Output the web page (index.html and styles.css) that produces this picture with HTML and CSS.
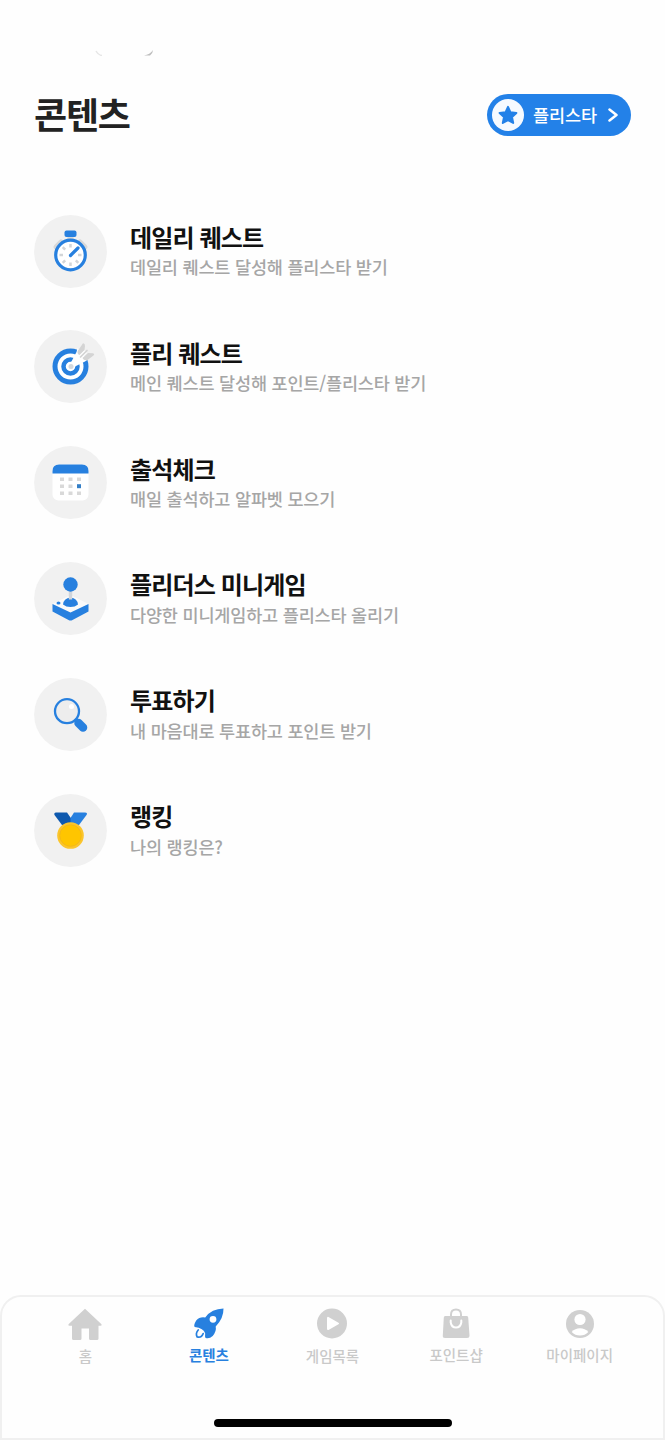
FILE: index.html
```html
<!DOCTYPE html>
<html lang="ko">
<head>
<meta charset="utf-8">
<title>콘텐츠</title>
<link rel="stylesheet" href="styles.css">
</head>
<body>
<div class="app">
  <div class="status"><svg width="60" height="8" viewBox="0 0 60 8"><path d="M1 3Q3 7 7 7.500" fill="none" stroke="#e6e6e6" stroke-width="1.500"/><path d="M58 2Q55 6.500 49 7.500L55 7.500Q58 5 58 2Z" fill="#bdbdbd"/></svg></div>
  <header class="header">
    <h1 class="title">콘텐츠</h1>
    <a class="pill">
      <svg class="pill-star" viewBox="0 0 32 32"><circle cx="16" cy="16" r="16" fill="#f6faff"/><path d="M16 7.800L18.500 13.300L24.400 14L20 18.100L21.200 24L16 21.100L10.800 24L12 18.100L7.600 14L13.500 13.300Z" fill="#2381e8" stroke="#2381e8" stroke-width="2" stroke-linejoin="round"/></svg>
      <span class="pill-text">플리스타</span>
      <svg class="pill-arrow" viewBox="0 0 10 14"><path d="M1.500 1.500L8.500 7L1.500 12.500" fill="none" stroke="#fff" stroke-width="2.500" stroke-linecap="round" stroke-linejoin="round"/></svg>
    </a>
  </header>

  <main class="list">
    <div class="item">
      <svg class="icon" viewBox="0 0 73 73"><circle cx="36.500" cy="36.500" r="36.400" fill="#f1f1f1"/><path d="M22 32L27 27M51 32L46 27" stroke="#d8d8d8" stroke-width="5" stroke-linecap="round"/><rect x="33.500" y="20" width="6" height="7" fill="#d8d8d8"/><rect x="30.500" y="15.500" width="12" height="6.500" rx="2" fill="#2780df"/><circle cx="36.500" cy="40" r="14.800" fill="#fff" stroke="#2780df" stroke-width="3.200"/><g stroke="#d2d5d8" stroke-width="2.500"><path d="M36.500 29v3.500M36.500 47.500V51M25.500 40H29M44 40h3.500M28.700 32.200l2.500 2.500M28.700 47.800l2.500-2.500M44.300 47.800l-2.500-2.500"/></g><path d="M36.500 40.500L44 33" stroke="#2780df" stroke-width="3.200" stroke-linecap="round"/></svg>
      <div class="copy"><h2 class="name">데일리 퀘스트</h2><p class="desc">데일리 퀘스트 달성해 플리스타 받기</p></div>
    </div>
    <div class="item">
      <svg class="icon" viewBox="0 0 73 73"><circle cx="36.500" cy="36.500" r="36.400" fill="#f1f1f1"/><circle cx="36.500" cy="36.500" r="15.500" fill="#fff" stroke="#2780df" stroke-width="5"/><circle cx="36.500" cy="36.500" r="7" fill="#fff" stroke="#2780df" stroke-width="4.500"/><path d="M43.500 18L54.500 29L51 31.500L42 36L38.500 38.500L35 35L38 30.500L42.500 22Z" fill="#fff"/><path d="M37.500 35.500L51.500 21.500" stroke="#fff" stroke-width="4"/><path d="M43.700 21L49 13.200Q51 13 51 16L50.500 20L45.500 25Q43 24 43.700 21ZM48.500 28L54 23L59 23.300Q61 24 59.500 25.500L53.500 30Q50 31 48.500 28Z" fill="#d4d4d4"/><path d="M46.500 27L53 20.500" stroke="#d4d4d4" stroke-width="1.700" stroke-linecap="round"/><circle cx="37" cy="36.500" r="2.500" fill="#d3d8dd"/></svg>
      <div class="copy"><h2 class="name">플리 퀘스트</h2><p class="desc">메인 퀘스트 달성해 포인트/플리스타 받기</p></div>
    </div>
    <div class="item">
      <svg class="icon" viewBox="0 0 73 73"><circle cx="36.500" cy="36.500" r="36.400" fill="#f1f1f1"/><rect x="18.500" y="18.500" width="36" height="36" rx="6" fill="#fff"/><path d="M18.500 27.500V25Q18.500 18.500 25 18.500H48Q54.500 18.500 54.500 25V27.500Z" fill="#2780df"/><g fill="#d9d9d9"><path d="M26 31.500h4v3.500h-4zM34.500 31.500h4v3.500h-4zM43 31.500h4v3.500h-4zM26 38.500h4v3.500h-4zM34.500 38.500h4v3.500h-4zM26 45.500h4v3.500h-4zM34.500 45.500h4v3.500h-4zM43 45.500h4v3.500h-4z"/></g><path d="M43 38.200h4v4h-4z" fill="#347fc7"/></svg>
      <div class="copy"><h2 class="name">출석체크</h2><p class="desc">매일 출석하고 알파벳 모으기</p></div>
    </div>
    <div class="item">
      <svg class="icon" viewBox="0 0 73 73"><circle cx="36.500" cy="36.500" r="36.400" fill="#f1f1f1"/><path d="M18.500 42L36.500 33L54.500 42L36.500 51Z" fill="#fafafa"/><path d="M18.500 42L36.500 50.500L54.500 42V49.500L38.500 58Q36.500 59 34.500 58L18.500 49.500Z" fill="#2780df"/><path d="M29 42.500Q29.500 36.500 36.500 35.500Q43.500 36.500 44 42.500Q41 45 36.500 45Q32 45 29 42.500Z" fill="#2780df"/><rect x="34.800" y="29" width="3.400" height="8.500" fill="#d0d5dc"/><circle cx="36.500" cy="22.500" r="7.200" fill="#2780df"/><ellipse cx="24.500" cy="41" rx="2" ry="1.500" fill="#2780df"/></svg>
      <div class="copy"><h2 class="name">플리더스 미니게임</h2><p class="desc">다양한 미니게임하고 플리스타 올리기</p></div>
    </div>
    <div class="item">
      <svg class="icon" viewBox="0 0 73 73"><circle cx="36.500" cy="36.500" r="36.400" fill="#f1f1f1"/><circle cx="33" cy="33.200" r="12" fill="#ededed" stroke="#2780df" stroke-width="2.300"/><circle cx="37.500" cy="28.500" r="2.500" fill="#fff"/><path d="M41 41.500L44 45" stroke="#2780df" stroke-width="3"/><path d="M44.500 45L49 49.500" stroke="#2780df" stroke-width="8.500" stroke-linecap="round"/></svg>
      <div class="copy"><h2 class="name">투표하기</h2><p class="desc">내 마음대로 투표하고 포인트 받기</p></div>
    </div>
    <div class="item">
      <svg class="icon" viewBox="0 0 73 73"><circle cx="36.500" cy="36.500" r="36.400" fill="#f1f1f1"/><path d="M22 18.500H33L37.500 25V31H28L20.500 21Q19.500 19 22 18.500Z" fill="#0e59ae"/><path d="M40 18.500H51Q54 18.500 52.500 21L45 31H36.500V24Z" fill="#2780df"/><circle cx="36.500" cy="41.500" r="13.300" fill="#fbc52c"/><circle cx="36.500" cy="41.500" r="10.800" fill="#ffc500" stroke="#f0b51d" stroke-width=".8"/></svg>
      <div class="copy"><h2 class="name">랭킹</h2><p class="desc">나의 랭킹은?</p></div>
    </div>
  </main>

  <div class="dock">
    <nav class="nav">
      <a class="tab tab-home"><svg class="tab-icon" viewBox="0 0 34 34"><path d="M17 .7L33.500 16.200Q34 17.700 32.500 17.700H30.500V30.500Q30.500 32 29 32H22.500Q21 32 21 30.500V20.500H13.500V30.500Q13.500 32 12 32H5.500Q4 32 4 30.500V17.700H1.500Q0 17.700 .5 16.200Z" fill="#d0d0d0"/></svg><span>홈</span></a>
      <a class="tab active"><svg class="tab-icon" viewBox="0 0 34 34"><path d="M31.500 .6Q31.700 10.400 23.700 18.600Q24.700 23.400 20.700 27.900Q17.200 31.200 13.700 29.900Q12.700 29.400 13.200 25.400Q11.700 19.900 2.700 18.900Q1.200 17.400 4.200 12.400Q7.700 8.400 13.200 9.400Q19.700 .9 31.500 .6ZM21 7.900A3.400 3.400 0 1 0 21 14.700A3.400 3.400 0 1 0 21 7.900Z" fill="#2780df" fill-rule="evenodd"/><path d="M6.200 22Q3.200 25.500 5.200 29Q9.700 30 11.200 25.500" fill="none" stroke="#2780df" stroke-width="1.700" stroke-linecap="round"/></svg><span>콘텐츠</span></a>
      <a class="tab tab-games"><svg class="tab-icon" viewBox="0 0 34 34"><circle cx="17" cy="15.500" r="15" fill="#d0d0d0"/><path d="M13 9.900V21.100L23 15.500Z" fill="#fff" stroke="#fff" stroke-width="2" stroke-linejoin="round"/></svg><span>게임목록</span></a>
      <a class="tab"><svg class="tab-icon" viewBox="0 0 34 34"><path d="M6 8H28Q29 8 29.200 9.500L30.500 27.500Q30.500 30 28 30H6Q3.500 30 3.800 27.500L4.800 9.500Q5 8 6 8Z" fill="#d0d0d0"/><path d="M12 8V6.500Q12 1.500 17 1.500T22 6.500V8" fill="none" stroke="#d0d0d0" stroke-width="2"/><path d="M11.700 12.500V14.500Q12.500 19.500 17 19.500T22.300 14.500V12.500" fill="none" stroke="#fff" stroke-width="2" stroke-linecap="round"/></svg><span>포인트샵</span></a>
      <a class="tab"><svg class="tab-icon" viewBox="0 0 34 34"><circle cx="17" cy="16" r="14" fill="#d0d0d0"/><circle cx="17" cy="11.500" r="5.600" fill="#fff"/><path d="M8.700 24Q12 20.300 17 20.300T25.300 24Q22 27.500 17 27.500T8.700 24Z" fill="#fff"/></svg><span>마이페이지</span></a>
    </nav>
    <div class="handle"></div>
  </div>
</div>
</body>
</html>
```
FILE: styles.css
```css
* { box-sizing: border-box; }
body {
  margin: 0;
  background: #fefefe;
  font-family: "Noto Sans CJK KR", sans-serif;
}
.app {
  width: 665px;
  height: 1440px;
  display: flex;
  flex-direction: column;
  overflow: hidden;
}
.status { height: 94px; padding: 48px 0 0 95px; line-height: 0; }
.header {
  display: flex;
  align-items: center;
  justify-content: space-between;
  height: 42px;
  padding: 0 34px;
}
.title {
  margin: 0 0 4px;
  font-size: 36px;
  line-height: 42px;
  letter-spacing: -1.2px;
  font-weight: 700;
  color: #222;
}
.pill {
  display: flex;
  align-items: center;
  width: 144px;
  height: 42px;
  padding-left: 5px;
  border-radius: 21px;
  background: #2381e8;
  color: #fff;
}
.pill-star { width: 32px; height: 32px; }
.pill-text {
  margin-left: 9px;
  width: 65px;
  font-size: 17.5px;
  line-height: 24px;
  letter-spacing: -0.1px;
  font-weight: 500;
  white-space: nowrap;
}
.pill-arrow { width: 10px; height: 14px; margin-left: 10px; }
.list {
  flex: 1;
  display: flex;
  flex-direction: column;
  gap: 42.9px;
  padding: 78.500px 34px 0;
}
.item { display: flex; height: 73px; gap: 23px; }
.icon { width: 73px; height: 73px; flex: none; }
.copy { padding-top: 7.3px; }
.name {
  margin: 0;
  font-size: 24px;
  line-height: 30px;
  letter-spacing: -0.85px;
  font-weight: 700;
  color: #111;
}
.desc {
  margin: 2.700px 0 0;
  font-size: 17.5px;
  line-height: 26px;
  letter-spacing: -0.18px;
  font-weight: 500;
  color: #a6a6a6;
}
.dock {
  height: 145px;
  background: #fefefe;
  border: 2px solid #f0f0f0;
  border-radius: 21px 21px 0 0;
  display: flex;
  flex-direction: column;
  align-items: center;
}
.nav { display: flex; width: 618px; height: 122px; }
.tab {
  flex: 1;
  display: flex;
  flex-direction: column;
  align-items: center;
  padding-top: 11px;
  font-size: 14.5px;
  line-height: 20px;
  font-weight: 500;
  color: #c9c9c9;
}
.tab-icon { width: 34px; height: 34px; margin-bottom: 3px; }
.tab-home .tab-icon, .tab-games .tab-icon { margin-bottom: 4px; }
.active { color: #2780df; font-weight: 700; }
.handle { width: 238px; height: 8px; border-radius: 4px; background: #000; }
```
